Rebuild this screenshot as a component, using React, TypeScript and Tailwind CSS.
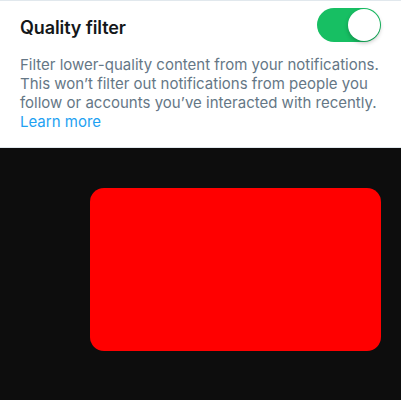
const App = () => {
  return (
    <div className="w-[401px] h-[400px] flex flex-col bg-[#0d0d0d] font-['Inter','Roboto',sans-serif]">
      {/* Settings row */}
      <div className="h-[148px] bg-white border-t border-b border-[#e1e8ed] px-5 pt-[7px]">
        <div className="flex items-start justify-between">
          <h2 className="mt-[3px] text-[18px] leading-[34px] font-semibold text-[#14171a] tracking-[-0.1px]">Quality filter</h2>
          <div className="w-[64px] h-[34px] rounded-full bg-[#17bf63] flex items-center justify-end p-[1px]">
            <div className="w-[32px] h-[32px] rounded-full bg-white shadow-[0_2px_4px_rgba(0,0,0,0.25)]" />
          </div>
        </div>
        <p className="mt-[10px] text-[15px] leading-[19px] text-[#657786]">
          Filter lower-quality content from your notifications. This won’t filter out notifications from people you follow or accounts you’ve interacted with recently.
          <br />
          <span className="text-[#1da1f2]">Learn more</span>
        </p>
      </div>

      {/* Preview area */}
      <div className="flex-1 pt-[40px] pl-[90px] pr-[20px]">
        <div className="h-[163px] rounded-[14px] bg-[#ff0000]" />
      </div>
    </div>
  );
};

export default App;
